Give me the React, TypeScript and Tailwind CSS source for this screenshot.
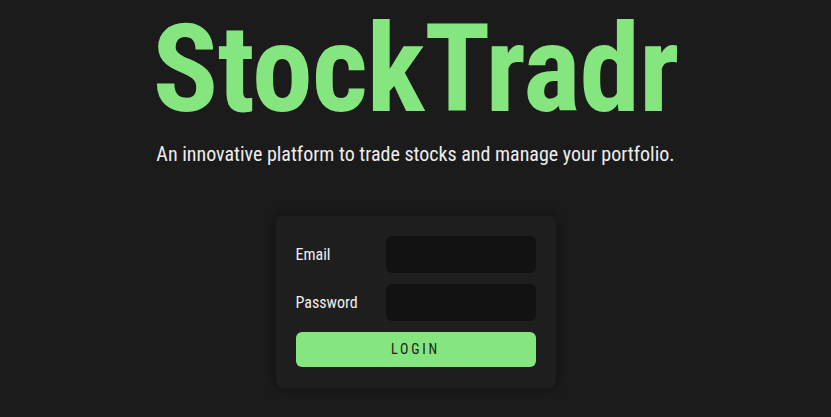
export default function App() {
  return (
    <div
      className="min-h-screen w-full bg-[#1b1b1b] flex flex-col items-center text-[#eeeeee]"
      style={{ fontFamily: 'Roboto, "Liberation Sans", sans-serif' }}
    >
      {/* Title */}
      <h1 className="text-[122px] leading-[140px] font-bold text-[#85e680] tracking-[-1px] font-stretch-condensed">
        StockTradr
      </h1>
      <p className="mt-[1px] text-[20px] leading-[26px] font-stretch-condensed">
        An innovative platform to trade stocks and manage your portfolio.
      </p>

      {/* Login card */}
      <div className="mt-[49px] w-[280px] rounded-md bg-[#1e1e1e] px-5 pt-5 pb-[21px] shadow-[0_0_12px_rgba(0,0,0,0.45)]">
        <div className="flex flex-col gap-[11px]">
          <div className="flex items-center">
            <label className="w-[90px] text-[16px] font-normal font-stretch-condensed">Email</label>
            <input type="email" className="h-[37px] w-[150px] rounded-md bg-[#121212] outline-none" />
          </div>
          <div className="flex items-center">
            <label className="w-[90px] text-[16px] font-normal font-stretch-condensed">Password</label>
            <input type="password" className="h-[37px] w-[150px] rounded-md bg-[#121212] outline-none" />
          </div>
          <button className="h-[35px] w-full rounded-md bg-[#85e680] text-[14px] tracking-[0.2em] text-[#1b1b1b] font-stretch-condensed">
            LOGIN
          </button>
        </div>
      </div>
    </div>
  );
}
